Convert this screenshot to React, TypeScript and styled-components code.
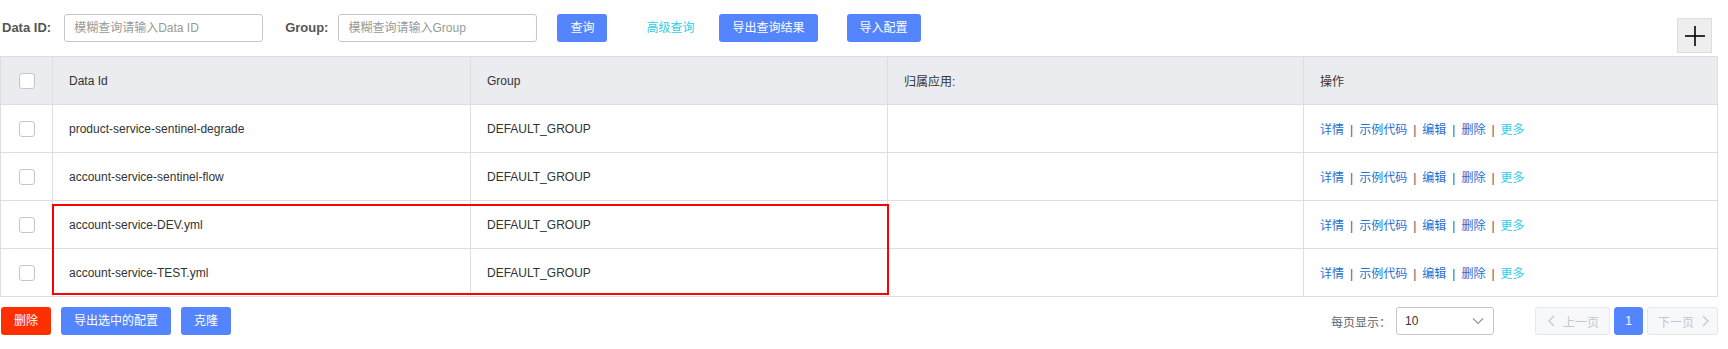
import React from "react";
import styled, { createGlobalStyle } from "styled-components";

const GlobalStyle = createGlobalStyle`
  html, body { margin: 0; padding: 0; background: #fff; }
  body {
    font-family: "Liberation Sans", "Noto Sans CJK SC", sans-serif;
    font-size: 12px;
    color: #333;
  }
  * { box-sizing: border-box; }
`;

const Page = styled.div`
  width: 1718px;
`;

const Toolbar = styled.div`
  display: flex;
  align-items: flex-start;
  height: 56px;
  padding-top: 14px;
`;

const Label = styled.label<{ $ml?: number; $mr?: number }>`
  font-size: 13px;
  font-weight: bold;
  color: #555;
  line-height: 28px;
  margin-left: ${(p) => p.$ml ?? 0}px;
  margin-right: ${(p) => p.$mr ?? 12}px;
  white-space: nowrap;
`;

const Field = styled.input`
  width: 199px;
  height: 28px;
  border: 1px solid #c4c6cf;
  border-radius: 3px;
  padding: 0 9px;
  font-family: inherit;
  font-size: 12px;
  color: #333;
  outline: none;
  &::placeholder { color: #999; }
`;

const Button = styled.button<{ $ml?: number; $danger?: boolean }>`
  height: 28px;
  padding: 0 12px;
  margin-left: ${(p) => p.$ml ?? 0}px;
  border: 1px solid transparent;
  border-radius: 3px;
  background: ${(p) => (p.$danger ? "#ff3000" : "#5584ff")};
  color: #fff;
  font-family: inherit;
  font-size: 12px;
  line-height: 26px;
  white-space: nowrap;
  cursor: pointer;
`;

const TextLink = styled.a<{ $ml?: number }>`
  margin-left: ${(p) => p.$ml ?? 0}px;
  line-height: 28px;
  color: #33cde5;
  text-decoration: none;
  white-space: nowrap;
`;

const PlusButton = styled.button`
  margin-left: auto;
  margin-top: 4px;
  margin-right: 6px;
  width: 35px;
  height: 35px;
  padding: 0;
  border: 1px solid #dddddd;
  background: #eeeeee;
  display: flex;
  align-items: center;
  justify-content: center;
`;

const TableWrap = styled.div`
  position: relative;
`;

const Table = styled.table`
  width: 1718px;
  table-layout: fixed;
  border-collapse: collapse;
  border: 1px solid #dcdee3;
`;

const HeadCell = styled.th<{ $center?: boolean }>`
  height: 48px;
  padding: ${(p) => (p.$center ? "0" : "0 16px")};
  background: #ebecf0;
  border: 1px solid #dcdee3;
  text-align: ${(p) => (p.$center ? "center" : "left")};
  font-weight: normal;
  color: #333;
  vertical-align: middle;
`;

const Cell = styled.td<{ $center?: boolean }>`
  height: 48px;
  padding: ${(p) => (p.$center ? "0" : "0 16px")};
  border: 1px solid #dcdee3;
  text-align: ${(p) => (p.$center ? "center" : "left")};
  color: #333;
  vertical-align: middle;
  white-space: nowrap;
`;

const Check = styled.span`
  display: inline-block;
  width: 16px;
  height: 16px;
  border: 1px solid #c4c6cf;
  border-radius: 3px;
  background: #fff;
  vertical-align: middle;
`;

const OpLink = styled.a<{ $more?: boolean }>`
  color: ${(p) => (p.$more ? "#33cde5" : "#1f6fd1")};
  text-decoration: none;
`;

const Sep = styled.span`
  margin: 0 6px;
  color: #555;
`;

const Highlight = styled.div`
  position: absolute;
  left: 52px;
  top: 148px;
  width: 837px;
  height: 91px;
  border: 2px solid #ff0000;
  pointer-events: none;
`;

const Footer = styled.div`
  display: flex;
  align-items: center;
  padding-top: 10px;
`;

const Actions = styled.div`
  display: flex;
  gap: 10px;
  margin-left: 1px;
`;

const Pager = styled.div`
  margin-left: auto;
  display: flex;
  align-items: center;
`;

const PageSizeLabel = styled.span`
  color: #666;
  white-space: nowrap;
`;

const Select = styled.div`
  width: 98px;
  height: 28px;
  margin-left: 5px;
  border: 1px solid #c4c6cf;
  border-radius: 3px;
  display: flex;
  align-items: center;
  justify-content: space-between;
  padding: 0 8px 0 8px;
  color: #333;
`;

const PageNav = styled.div`
  display: flex;
  gap: 4px;
  margin-left: 41px;
`;

const PageButton = styled.button<{ $active?: boolean; $pl?: number; $pr?: number }>`
  height: 28px;
  min-width: 29px;
  padding: 0 ${(p) => p.$pr ?? 10}px 0 ${(p) => p.$pl ?? 10}px;
  display: flex;
  align-items: center;
  justify-content: center;
  gap: 5px;
  border: 1px solid ${(p) => (p.$active ? "#5584ff" : "#e6e7eb")};
  border-radius: 3px;
  background: ${(p) => (p.$active ? "#5584ff" : "#f7f8fa")};
  color: ${(p) => (p.$active ? "#fff" : "#c4c6cf")};
  font-family: inherit;
  font-size: 12px;
  white-space: nowrap;
`;

const Chevron = ({ dir }: { dir: "left" | "right" }) => {
  const pts = dir === "left" ? "8,2 3,7 8,12" : "4,2 9,7 4,12";
  return (
    <svg width="12" height="14" viewBox="0 0 12 14" style={{ display: "block" }}>
      <polyline points={pts} fill="none" stroke="currentColor" strokeWidth="1.2" />
    </svg>
  );
};

const DownArrow = () => (
  <svg width="14" height="14" viewBox="0 0 14 14" style={{ display: "block" }}>
    <polyline points="2,4.5 7,9.5 12,4.5" fill="none" stroke="#999" strokeWidth="1.2" />
  </svg>
);

const rows = [
  "product-service-sentinel-degrade",
  "account-service-sentinel-flow",
  "account-service-DEV.yml",
  "account-service-TEST.yml",
];

export default function App() {
  return (
    <Page>
      <GlobalStyle />
      <Toolbar>
        <Label $ml={2} $mr={13}>Data ID:</Label>
        <Field placeholder="模糊查询请输入Data ID" />
        <Label $ml={22} $mr={10}>Group:</Label>
        <Field placeholder="模糊查询请输入Group" />
        <Button $ml={20}>查询</Button>
        <TextLink $ml={39}>高级查询</TextLink>
        <Button $ml={25}>导出查询结果</Button>
        <Button $ml={29}>导入配置</Button>
        <PlusButton aria-label="add">
          <svg width="20" height="20" viewBox="0 0 20 20">
            <line x1="0" y1="10" x2="20" y2="10" stroke="#000" strokeWidth="1.6" />
            <line x1="10" y1="0" x2="10" y2="20" stroke="#000" strokeWidth="1.6" />
          </svg>
        </PlusButton>
      </Toolbar>

      <TableWrap>
        <Table>
          <colgroup>
            <col style={{ width: 52 }} />
            <col style={{ width: 418 }} />
            <col style={{ width: 417 }} />
            <col style={{ width: 416 }} />
            <col />
          </colgroup>
          <thead>
            <tr>
              <HeadCell $center>
                <Check />
              </HeadCell>
              <HeadCell>Data Id</HeadCell>
              <HeadCell>Group</HeadCell>
              <HeadCell>归属应用:</HeadCell>
              <HeadCell>操作</HeadCell>
            </tr>
          </thead>
          <tbody>
            {rows.map((id) => (
              <tr key={id}>
                <Cell $center>
                  <Check />
                </Cell>
                <Cell>{id}</Cell>
                <Cell>DEFAULT_GROUP</Cell>
                <Cell />
                <Cell>
                  <OpLink>详情</OpLink>
                  <Sep>|</Sep>
                  <OpLink>示例代码</OpLink>
                  <Sep>|</Sep>
                  <OpLink>编辑</OpLink>
                  <Sep>|</Sep>
                  <OpLink>删除</OpLink>
                  <Sep>|</Sep>
                  <OpLink $more>更多</OpLink>
                </Cell>
              </tr>
            ))}
          </tbody>
        </Table>
        <Highlight />
      </TableWrap>

      <Footer>
        <Actions>
          <Button $danger>删除</Button>
          <Button>导出选中的配置</Button>
          <Button>克隆</Button>
        </Actions>
        <Pager>
          <PageSizeLabel>每页显示：</PageSizeLabel>
          <Select>
            <span>10</span>
            <DownArrow />
          </Select>
          <PageNav>
            <PageButton>
              <Chevron dir="left" />
              上一页
            </PageButton>
            <PageButton $active>1</PageButton>
            <PageButton $pl={10} $pr={6}>
              下一页
              <Chevron dir="right" />
            </PageButton>
          </PageNav>
        </Pager>
      </Footer>
    </Page>
  );
}
